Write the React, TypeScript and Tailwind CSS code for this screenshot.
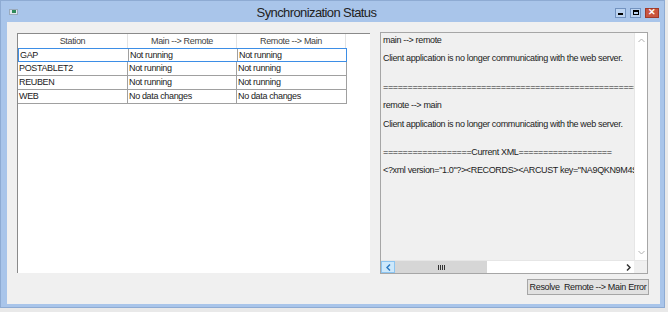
import React from "react";

const F = { fontFamily: '"Liberation Sans", Arial, sans-serif' };

const rows = [
  ["GAP", "Not running", "Not running"],
  ["POSTABLET2", "Not running", "Not running"],
  ["REUBEN", "Not running", "Not running"],
  ["WEB", "No data changes", "No data changes"],
];

export default function App() {
  return (
    <div className="w-[668px] h-[312px] bg-[#e9e9e9] overflow-hidden" style={F}>
      <div className="w-[665px] h-[308px] bg-[#a9c5ea] border border-[#8eabd3] flex flex-col">
        {/* title bar */}
        <div className="h-[21px] flex items-center relative shrink-0">
          <div className="ml-[8px] w-[9px] h-[6px] bg-[#dfe7ee] border border-[#9aaabb] flex items-center justify-center">
            <div className="w-[4px] h-[3px] bg-[#2f8a5a]" />
          </div>
          <div className="flex-1 text-center text-[13px] tracking-[-0.6px] text-[#222] leading-none pt-[2px]">Synchronization Status</div>
          <div className="flex items-center gap-[4px] mr-[5px] mt-[2px]">
            <div className="w-[11px] h-[10px] bg-[#bcd3f0] border border-[#7393c0] flex items-center justify-center">
              <div className="w-[5px] h-[2px] bg-black mt-[2px]" />
            </div>
            <div className="w-[11px] h-[10px] bg-[#bcd3f0] border border-[#7393c0] flex items-center justify-center">
              <div className="w-[6px] h-[5px] border border-black border-t-2" />
            </div>
            <div className="w-[14px] h-[10px] bg-[#c9553f] border border-[#a03a2a] flex items-center justify-center text-white text-[9px] font-bold leading-none">
              ✕
            </div>
          </div>
        </div>
        {/* client */}
        <div className="flex-1 ml-[6px] mr-[4px] mb-[3px] bg-[#f0f0f0] pt-[10px] pl-[10px] pr-[12px] flex flex-col">
          <div className="flex">
            {/* list view */}
            <div className="w-[353px] h-[240px] mt-[1px] bg-white border-t border-l border-[#8a8a8a] text-[9px] tracking-[-0.35px] text-[#222] leading-none">
              <div className="flex h-[14px] items-center text-[#444]">
                <div className="w-[110px] text-center border-r border-[#e3e3e3] h-full flex items-center justify-center">Station</div>
                <div className="w-[109px] text-center border-r border-[#e3e3e3] h-full flex items-center justify-center">Main --&gt; Remote</div>
                <div className="w-[109px] text-center border-r border-[#e3e3e3] h-full flex items-center justify-center">Remote --&gt; Main</div>
              </div>
              {rows.map((r, i) => (
                <div
                  key={i}
                  className={
                    "flex h-[14px] w-[329px] " +
                    (i === 0 ? "border border-[#3d8ee6]" : "border-b border-r border-[#a0a0a0]")
                  }
                >
                  <div className="w-[110px] border-r border-[#a0a0a0] flex items-center pl-[1px]">{r[0]}</div>
                  <div className="w-[109px] border-r border-[#a0a0a0] flex items-center pl-[1px]">{r[1]}</div>
                  <div className="flex-1 flex items-center pl-[1px]">{r[2]}</div>
                </div>
              ))}
            </div>
            {/* text box */}
            <div className="ml-[10px] w-[268px] h-[242px] border border-[#a6a6a6] flex flex-col bg-[#f0f0f0]">
              <div className="flex flex-1 min-h-0">
                <div className="flex-1 overflow-hidden whitespace-nowrap text-[9px] tracking-[-0.35px] text-[#222] leading-[18px] pl-[2px]">
                  <div className="mt-[-2px]">main --&gt; remote</div>
                  <div>Client application is no longer communicating with the web server.</div>
                  <div className="mt-[11px]">==============================================================================</div>
                  <div>remote --&gt; main</div>
                  <div className="mt-[1px]">Client application is no longer communicating with the web server.</div>
                  <div className="mt-[10px]">==================Current XML===================</div>
                  <div>&lt;?xml version="1.0"?&gt;&lt;RECORDS&gt;&lt;ARCUST key="NA9QKN9M4S</div>
                </div>
                <div className="w-[13px] bg-white border-l border-[#e6e6e6] flex flex-col justify-between items-center py-[5px]">
                  <svg width="7" height="5" viewBox="0 0 7 5"><path d="M0.5 4 L3.5 1 L6.5 4" fill="none" stroke="#b0b0b0" strokeWidth="1" /></svg>
                  <svg width="7" height="5" viewBox="0 0 7 5"><path d="M0.5 1 L3.5 4 L6.5 1" fill="none" stroke="#b0b0b0" strokeWidth="1" /></svg>
                </div>
              </div>
              <div className="h-[13px] flex shrink-0 border-t border-[#e6e6e6]">
                <div className="w-[14px] bg-[#cde8fb] border border-[#8cc4f0] flex items-center justify-center">
                  <svg width="5" height="7" viewBox="0 0 5 7"><path d="M4 0.5 L1 3.5 L4 6.5" fill="none" stroke="#2b79c2" strokeWidth="1.5" /></svg>
                </div>
                <div className="w-[92px] bg-[#d6d6d6] flex items-center justify-center">
                  <div className="flex gap-[1px]">
                    <div className="w-[1px] h-[5px] bg-[#333]" />
                    <div className="w-[1px] h-[5px] bg-[#333]" />
                    <div className="w-[1px] h-[5px] bg-[#333]" />
                    <div className="w-[1px] h-[5px] bg-[#333]" />
                  </div>
                </div>
                <div className="flex-1 bg-white flex items-center justify-end pr-[3px]">
                  <svg width="5" height="7" viewBox="0 0 5 7"><path d="M1 0.5 L4 3.5 L1 6.5" fill="none" stroke="#333" strokeWidth="1.5" /></svg>
                </div>
                <div className="w-[13px] bg-[#f0f0f0]" />
              </div>
            </div>
          </div>
          <div className="flex justify-end mt-[5px] mr-[-1px]">
            <div className="w-[122px] h-[16px] bg-[#e1e1e1] border border-[#a6a6a6] text-[9px] tracking-[-0.35px] text-[#222] flex items-center justify-center leading-none whitespace-pre">
              Resolve  Remote --&gt; Main Error
            </div>
          </div>
        </div>
      </div>
    </div>
  );
}
